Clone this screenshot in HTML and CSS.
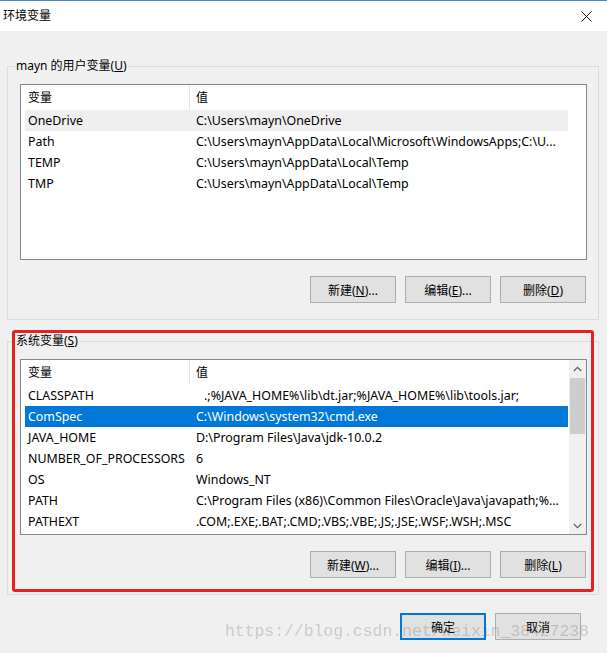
FILE: index.html
```html
<!DOCTYPE html>
<html lang="zh-CN">

<head>
    <meta charset="UTF-8">
    <meta name="viewport" content="width=device-width, initial-scale=1.0">
    <title>环境变量</title>
    <link rel="stylesheet" href="styles.css">
</head>

<body>
    <div class="window">
        <div class="titlebar">
            <span class="title">环境变量</span>
            <span class="close">
                <svg width="11" height="11" viewBox="0 0 11 11">
                    <path d="M0.5 0.5 L10.5 10.5 M10.5 0.5 L0.5 10.5" stroke="#111" stroke-width="1" fill="none" />
                </svg>
            </span>
        </div>
        <div class="content">
            <fieldset class="group">
                <legend>mayn 的用户变量(<u>U</u>)</legend>
                <div class="listview">
                    <div class="columns">
                        <div class="header">
                            <div class="head-name">变量</div>
                            <div class="head-value">值</div>
                        </div>
                        <div class="row hover">
                            <div class="cell-name">OneDrive</div>
                            <div class="cell-value">C:\Users\mayn\OneDrive</div>
                        </div>
                        <div class="row">
                            <div class="cell-name">Path</div>
                            <div class="cell-value">C:\Users\mayn\AppData\Local\Microsoft\WindowsApps;C:\U...</div>
                        </div>
                        <div class="row">
                            <div class="cell-name">TEMP</div>
                            <div class="cell-value">C:\Users\mayn\AppData\Local\Temp</div>
                        </div>
                        <div class="row">
                            <div class="cell-name">TMP</div>
                            <div class="cell-value">C:\Users\mayn\AppData\Local\Temp</div>
                        </div>
                    </div>
                </div>
                <div class="buttons">
                    <button>新建(<u>N</u>)...</button>
                    <button>编辑(<u>E</u>)...</button>
                    <button>删除(<u>D</u>)</button>
                </div>
            </fieldset>

            <div class="marked">
                <fieldset class="group">
                    <legend>系统变量(<u>S</u>)</legend>
                    <div class="listview">
                        <div class="columns">
                            <div class="header">
                                <div class="head-name">变量</div>
                                <div class="head-value">值</div>
                            </div>
                            <div class="row">
                                <div class="cell-name">CLASSPATH</div>
                                <div class="cell-value lead">.;%JAVA_HOME%\lib\dt.jar;%JAVA_HOME%\lib\tools.jar;</div>
                            </div>
                            <div class="row selected">
                                <div class="cell-name">ComSpec</div>
                                <div class="cell-value">C:\Windows\system32\cmd.exe</div>
                            </div>
                            <div class="row">
                                <div class="cell-name">JAVA_HOME</div>
                                <div class="cell-value">D:\Program Files\Java\jdk-10.0.2</div>
                            </div>
                            <div class="row">
                                <div class="cell-name">NUMBER_OF_PROCESSORS</div>
                                <div class="cell-value">6</div>
                            </div>
                            <div class="row">
                                <div class="cell-name">OS</div>
                                <div class="cell-value">Windows_NT</div>
                            </div>
                            <div class="row">
                                <div class="cell-name">PATH</div>
                                <div class="cell-value">C:\Program Files (x86)\Common Files\Oracle\Java\javapath;%...</div>
                            </div>
                            <div class="row">
                                <div class="cell-name">PATHEXT</div>
                                <div class="cell-value">.COM;.EXE;.BAT;.CMD;.VBS;.VBE;.JS;.JSE;.WSF;.WSH;.MSC</div>
                            </div>
                        </div>
                        <div class="scrollbar">
                            <div class="arrow">
                                <svg width="9" height="6" viewBox="0 0 9 6">
                                    <polyline points="0.8,5 4.5,1.3 8.2,5" stroke="#606060" stroke-width="1.2" fill="none" />
                                </svg>
                            </div>
                            <div class="thumb"></div>
                            <div class="track"></div>
                            <div class="arrow">
                                <svg width="9" height="6" viewBox="0 0 9 6">
                                    <polyline points="0.8,1 4.5,4.7 8.2,1" stroke="#606060" stroke-width="1.2" fill="none" />
                                </svg>
                            </div>
                        </div>
                    </div>
                    <div class="buttons">
                        <button>新建(<u>W</u>)...</button>
                        <button>编辑(<u>I</u>)...</button>
                        <button>删除(<u>L</u>)</button>
                    </div>
                </fieldset>
                <div class="red-box"></div>
            </div>

            <div class="footer">
                <button class="default">确定</button>
                <button>取消</button>
            </div>
        </div>
        <div class="watermark">https://blog.csdn.net/weixin_38427238</div>
    </div>
</body>

</html>
```

FILE: styles.css
```css
body {
    margin: 0px;
    font-family: "Noto Sans", "Noto Sans CJK SC", sans-serif;
    font-size: 12px;
    line-height: 16px;
    color: #000;
    background-color: #f0f0f0;
}

.window {
    position: relative;
    width: 607px;
    height: 653px;
    overflow: hidden;
    background-color: #f0f0f0;
}

.titlebar {
    display: flex;
    align-items: center;
    justify-content: space-between;
    height: 30px;
    padding-left: 3px;
    border-top: 1px solid #4a86c0;
    background-color: #fff;
}

.close {
    display: flex;
    align-items: center;
    justify-content: center;
    width: 42px;
    height: 30px;
}

.content {
    padding: 0px 8px 0px 7px;
}

.group {
    margin: 27px 0px 0px 0px;
    padding: 0px 11px 16px 12px;
    border: 1px solid #dcdcdc;
    min-width: 0;
}

.group legend {
    margin-left: -5px;
    padding: 0px 1px;
    line-height: 16px;
}

.listview {
    display: flex;
    height: 174px;
    margin-top: 10px;
    border: 1px solid #828790;
    background-color: #fff;
    overflow: hidden;
}

.columns {
    flex: 1;
    min-width: 0;
}

.header {
    display: flex;
    height: 25px;
    align-items: center;
}

.head-name {
    width: 161px;
    height: 25px;
    line-height: 25px;
    padding-left: 7px;
    border-right: 1px solid #e5e5e5;
}

.head-value {
    padding-left: 6px;
}

.row {
    display: flex;
    width: 543px;
    height: 21px;
    margin-left: 4px;
    font-size: 12.4px;
    line-height: 21px;
    white-space: nowrap;
    overflow: hidden;
}

.row.hover {
    background-color: #efefef;
}

.row.selected {
    background-color: #0078d7;
    color: #fff;
}

.cell-name {
    width: 165px;
    padding-left: 3px;
    flex-shrink: 0;
}

.cell-value {
    padding-left: 3px;
}

.cell-value.lead {
    padding-left: 11px;
}

.scrollbar {
    display: flex;
    flex-direction: column;
    width: 17px;
    background-color: #f0f0f0;
}

.scrollbar .arrow {
    display: flex;
    align-items: center;
    justify-content: center;
    height: 17px;
}

.scrollbar .thumb {
    height: 56px;
    margin: 1px 1px 0px 1px;
    background-color: #cdcdcd;
}

.scrollbar .track {
    flex: 1;
}

.buttons {
    display: flex;
    justify-content: flex-end;
    gap: 9px;
    margin-top: 16px;
    padding-right: 1px;
}

button {
    width: 86px;
    height: 27px;
    padding: 0px;
    font-family: inherit;
    font-size: 12px;
    color: #000;
    background-color: #e1e1e1;
    border: 1px solid #adadad;
}

button.default {
    border: 2px solid #0078d7;
}

.marked {
    position: relative;
    padding-top: 13px;
}

.marked .group {
    margin-top: 0px;
}

.red-box {
    position: absolute;
    left: 5px;
    top: 10px;
    width: 582px;
    height: 262px;
    box-sizing: border-box;
    border: 3px solid #e52222;
    border-radius: 3px;
}

.footer {
    display: flex;
    justify-content: flex-end;
    gap: 9px;
    padding: 18px 18px 0px 0px;
}

.watermark {
    position: absolute;
    left: 225px;
    top: 621px;
    font-family: "Liberation Mono", monospace;
    font-size: 16.4px;
    line-height: 22px;
    color: rgba(110, 110, 110, 0.3);
    white-space: nowrap;
}
```
